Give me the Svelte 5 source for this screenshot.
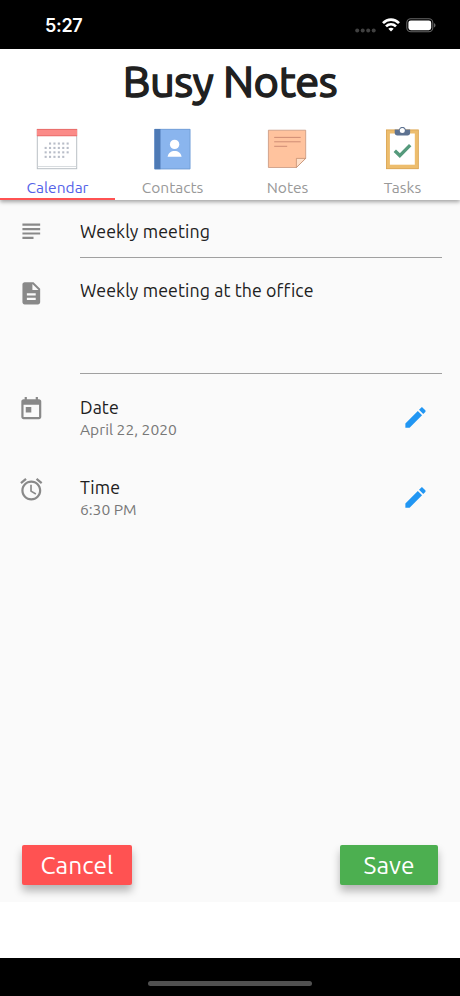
<script>
  let title = $state('Weekly meeting');
  let description = $state('Weekly meeting at the office');
  let active = $state('calendar');

  const tabs = [
    { id: 'calendar', label: 'Calendar' },
    { id: 'contacts', label: 'Contacts' },
    { id: 'notes', label: 'Notes' },
    { id: 'tasks', label: 'Tasks' }
  ];

  const pickers = [
    { id: 'date', label: 'Date', value: 'April 22, 2020' },
    { id: 'time', label: 'Time', value: '6:30 PM' }
  ];

  // rows of day dots in the calendar icon, as [y, first x, count]
  const dayRows = [
    [14.5, 13, 5],
    [18.9, 8.6, 6],
    [23.3, 8.6, 6],
    [27.8, 8.6, 5]
  ];
</script>

<div class="phone">
  <div class="status">
    <span class="clock">5:27</span>
    <div class="signals">
      <svg width="21" height="5" viewBox="0 0 21 5" fill="#414141">
        {#each [2.2, 7.7, 13.2, 18.7] as x}
          <circle cx={x} cy="2.5" r="2" />
        {/each}
      </svg>
      <svg class="wifi" width="18" height="14" viewBox="0 0 18 14" fill="none" stroke="#fff" stroke-width="2.7">
        <path d="M1 5.1C5.6.5 12.4.5 17 5.1" />
        <path d="M4 8.4c2.9-2.8 7.1-2.8 10 0" />
        <path d="M9 13.5L6.3 10.8c1.5-1.5 3.9-1.5 5.4 0z" fill="#fff" stroke="none" />
      </svg>
      <svg width="30" height="15" viewBox="0 0 30 15">
        <rect x=".8" y=".8" width="26" height="13" rx="4" fill="none" stroke="#666" stroke-width="1.1" />
        <rect x="2.4" y="2.4" width="22.8" height="9.8" rx="2.4" fill="#fff" />
        <path d="M28 5.2c2 .6 2 3.6 0 4.2z" fill="#666" />
      </svg>
    </div>
  </div>

  <header>
    <h1>Busy Notes</h1>
    <nav>
      {#each tabs as tab}
        <button class="tab" class:active={active === tab.id} onclick={() => (active = tab.id)}>
          <svg class="tab-icon" width="44" height="44" viewBox="0 0 44 44">
            {#if tab.id === 'calendar'}
              <rect x="2.3" y="2.5" width="39.4" height="39.2" fill="#fff" stroke="#b9c0c5" />
              <path d="M2.8 39.5h38.4" stroke="#d8dcdf" />
              <rect x="1.8" y="2" width="40.4" height="7" fill="#fb8b88" />
              <path d="M2 2.4h40M2 8.8h40" stroke="#e36663" stroke-width=".8" />
              {#each dayRows as [y, x, count]}
                {#each Array(count) as _, i}
                  <rect x={x + i * 4.4 + 1} y={y + 1} width="2.1" height="2.1" fill="#b8bdc8" />
                {/each}
              {/each}
            {:else if tab.id === 'contacts'}
              <rect x="4.5" y="2" width="35.8" height="40.2" fill="#8ab5ee" />
              <path d="M4.8 2.3h35.2v39.6h-35.2z" fill="none" stroke="#6b98cf" stroke-width=".7" />
              <rect x="4.5" y="2" width="6" height="40.2" fill="#4e7ab5" />
              <circle cx="24.6" cy="17.4" r="4.7" fill="#fff" />
              <path d="M17.6 29.8c.6-4 3.5-5.8 7-5.8s6.4 1.8 7 5.8z" fill="#fff" />
            {:else if tab.id === 'notes'}
              <path d="M3.4 3.2h37.3v28.2l-9.3 9.1h-28z" fill="#ffc39e" stroke="#c08d74" stroke-width=".7" />
              <path d="M31.4 40.5v-9.1h9.3z" fill="#ffe0ca" stroke="#bd8669" stroke-width=".7" />
              <path d="M9.2 10.4h26.5M9.2 14.8h26.5M9.2 19.3h13" stroke="#c9866f" stroke-width=".9" />
            {:else}
              <rect x="6" y="2.6" width="32.7" height="39.5" fill="#edbd6d" />
              <rect x="6.4" y="3" width="31.9" height="38.7" fill="none" stroke="#d7a355" stroke-width=".7" />
              <rect x="9.9" y="6.5" width="24.9" height="31.2" fill="#fff" />
              <path d="M14.7 2.5H19a3.5 3.5 0 0 1 6.8 0h4.3v3.3c0 1.7-1 2.8-2.6 2.8H17.4c-1.6 0-2.7-1.1-2.7-2.8z" fill="#5d7291" />
              <circle cx="22.3" cy="3.4" r="2.5" fill="#fff" />
              <path d="M14.8 23.8l5 4.8 10.4-10.5" fill="none" stroke="#559a7c" stroke-width="3.4" />
            {/if}
          </svg>
          <span>{tab.label}</span>
        </button>
      {/each}
    </nav>
  </header>

  <main>
    <div class="field">
      <svg class="icon" viewBox="0 0 24 24">
        <path d="M14 17H4v2h10v-2zm6-8H4v2h16V9zM4 15h16v-2H4v2zM4 5v2h16V5H4z" />
      </svg>
      <input type="text" aria-label="Title" bind:value={title} />
    </div>
    <div class="field tall">
      <svg class="icon" viewBox="0 0 24 24">
        <path d="M14 2H6c-1.1 0-1.99.9-1.99 2L4 20c0 1.1.89 2 1.99 2H18c1.1 0 2-.9 2-2V8l-6-6zm2 16H8v-2h8v2zm0-4H8v-2h8v2zm-3-5V3.5L18.5 9H13z" />
      </svg>
      <textarea aria-label="Description" bind:value={description}></textarea>
    </div>

    {#each pickers as picker}
      <div class="picker">
        <svg class="icon" viewBox="0 0 24 24">
          {#if picker.id === 'date'}
            <path d="M19 3h-1V1h-2v2H8V1H6v2H5c-1.11 0-1.99.9-1.99 2L3 19c0 1.1.89 2 2 2h14c1.1 0 2-.9 2-2V5c0-1.1-.9-2-2-2zm0 16H5V8h14v11zM7 10h5v5H7z" />
          {:else}
            <path d="M22 5.72l-4.6-3.86-1.29 1.53 4.6 3.86L22 5.72zM7.88 3.39L6.6 1.86 2 5.71l1.29 1.53 4.59-3.85zM12.5 8H11v6l4.75 2.85.75-1.23-4-2.37V8zM12 4c-4.97 0-9 4.03-9 9s4.02 9 9 9c4.97 0 9-4.03 9-9s-4.03-9-9-9zm0 16c-3.87 0-7-3.13-7-7s3.13-7 7-7 7 3.13 7 7-3.13 7-7 7z" />
          {/if}
        </svg>
        <div class="text">
          <span class="label">{picker.label}</span>
          <span class="value">{picker.value}</span>
        </div>
        <button class="edit" aria-label="Edit {picker.label}">
          <svg viewBox="0 0 24 24">
            <path d="M3 17.25V21h3.75L17.81 9.94l-3.75-3.75L3 17.25zM20.71 7.04c.39-.39.39-1.02 0-1.41l-2.34-2.34c-.39-.39-1.02-.39-1.41 0l-1.83 1.83 3.75 3.75 1.83-1.83z" />
          </svg>
        </button>
      </div>
    {/each}

    <div class="actions">
      <button class="btn cancel">Cancel</button>
      <button class="btn save">Save</button>
    </div>
  </main>

  <div class="bottom"></div>
  <div class="home"><div class="bar"></div></div>
</div>

<style>
  :global(body) {
    margin: 0;
    background: #fff;
  }

  .phone {
    display: flex;
    flex-direction: column;
    width: 460px;
    height: 996px;
    overflow: hidden;
    background: #fff;
    color: #202020;
    font-family: Ubuntu, "Noto Sans", sans-serif;
  }

  button {
    border: none;
    padding: 0;
    font-family: inherit;
    cursor: pointer;
  }

  .status {
    display: flex;
    justify-content: space-between;
    box-sizing: border-box;
    height: 49px;
    flex: none;
    padding: 15px 24px 0 45px;
    background: #000;
    color: #fff;
  }

  .clock {
    font: 600 18px/22px Inter, sans-serif;
    letter-spacing: -0.3px;
  }

  .signals {
    display: flex;
    align-items: flex-end;
    gap: 6px;
    height: 18px;
  }

  .signals .wifi {
    margin-bottom: 1px;
  }

  header {
    position: relative;
    box-sizing: border-box;
    flex: none;
    height: 151px;
    background: #fff;
    box-shadow: 0 2px 4px rgba(0, 0, 0, 0.35);
  }

  h1 {
    margin: 0;
    height: 78px;
    font-size: 43.5px;
    line-height: 63px;
    font-weight: 400;
    letter-spacing: -0.4px;
    -webkit-text-stroke: 1.5px #202020;
    text-align: center;
  }

  nav {
    display: grid;
    grid-template-columns: repeat(4, 1fr);
    height: 73px;
  }

  .tab {
    display: flex;
    flex-direction: column;
    align-items: center;
    background: none;
    border-bottom: 2px solid transparent;
    color: #999;
    font-size: 15.55px;
    line-height: 20px;
  }

  .tab span {
    margin-top: 7px;
  }

  .tab.active {
    color: #5462e8;
    border-bottom-color: #ff5252;
  }

  .tab-icon {
    flex: none;
    margin-right: 1px;
  }

  main {
    display: flex;
    flex-direction: column;
    flex: none;
    box-sizing: border-box;
    height: 702px;
    padding: 0 18px;
    background: #fafafa;
  }

  .icon {
    width: 26.6px;
    height: 26.6px;
    flex: none;
    fill: #898989;
  }

  .field {
    display: flex;
    height: 58px;
    box-sizing: border-box;
  }

  .field .icon {
    margin: 18px 35.4px 0 0;
  }

  .field.tall {
    height: 116px;
  }

  .field.tall .icon {
    margin-top: 22px;
  }

  input,
  textarea {
    flex: 1;
    box-sizing: border-box;
    min-width: 0;
    margin: 0;
    padding: 4px 0 0;
    border: none;
    border-bottom: 1px solid #a0a0a0;
    outline: none;
    background: none;
    color: inherit;
    font: 17.78px/24px Ubuntu, "Noto Sans", sans-serif;
    letter-spacing: 0.1px;
    resize: none;
  }

  textarea {
    padding-top: 20px;
  }

  .picker {
    display: flex;
    height: 80px;
  }

  .picker .icon {
    margin: 22px 35.4px 0 0;
  }

  .text {
    display: flex;
    flex: 1;
    flex-direction: column;
    padding-top: 21px;
  }

  .label {
    font-size: 17.78px;
    line-height: 24px;
    letter-spacing: 0.1px;
  }

  .value {
    color: #777;
    font-size: 15.6px;
    line-height: 21px;
  }

  .edit {
    width: 27px;
    height: 27px;
    margin: 30px 13.5px 0 0;
    background: none;
  }

  .edit svg {
    display: block;
    fill: #2196f3;
  }

  .actions {
    display: flex;
    justify-content: space-between;
    margin: auto 4px 17px;
  }

  .btn {
    height: 40px;
    border-radius: 2px;
    color: #fff;
    font-size: 24.5px;
    line-height: 41px;
    box-shadow: 0 6px 8px rgba(0, 0, 0, 0.28);
  }

  .cancel {
    width: 110px;
    background: #ff5252;
  }

  .save {
    width: 98px;
    background: #4caf50;
  }

  .bottom {
    position: relative;
    flex: none;
    height: 56px;
    background: #fff;
  }

  .home {
    display: flex;
    flex: 1;
    justify-content: center;
    background: #000;
  }

  .bar {
    width: 164px;
    height: 5px;
    margin-top: 23px;
    border-radius: 3px;
    background: #505050;
  }
</style>
